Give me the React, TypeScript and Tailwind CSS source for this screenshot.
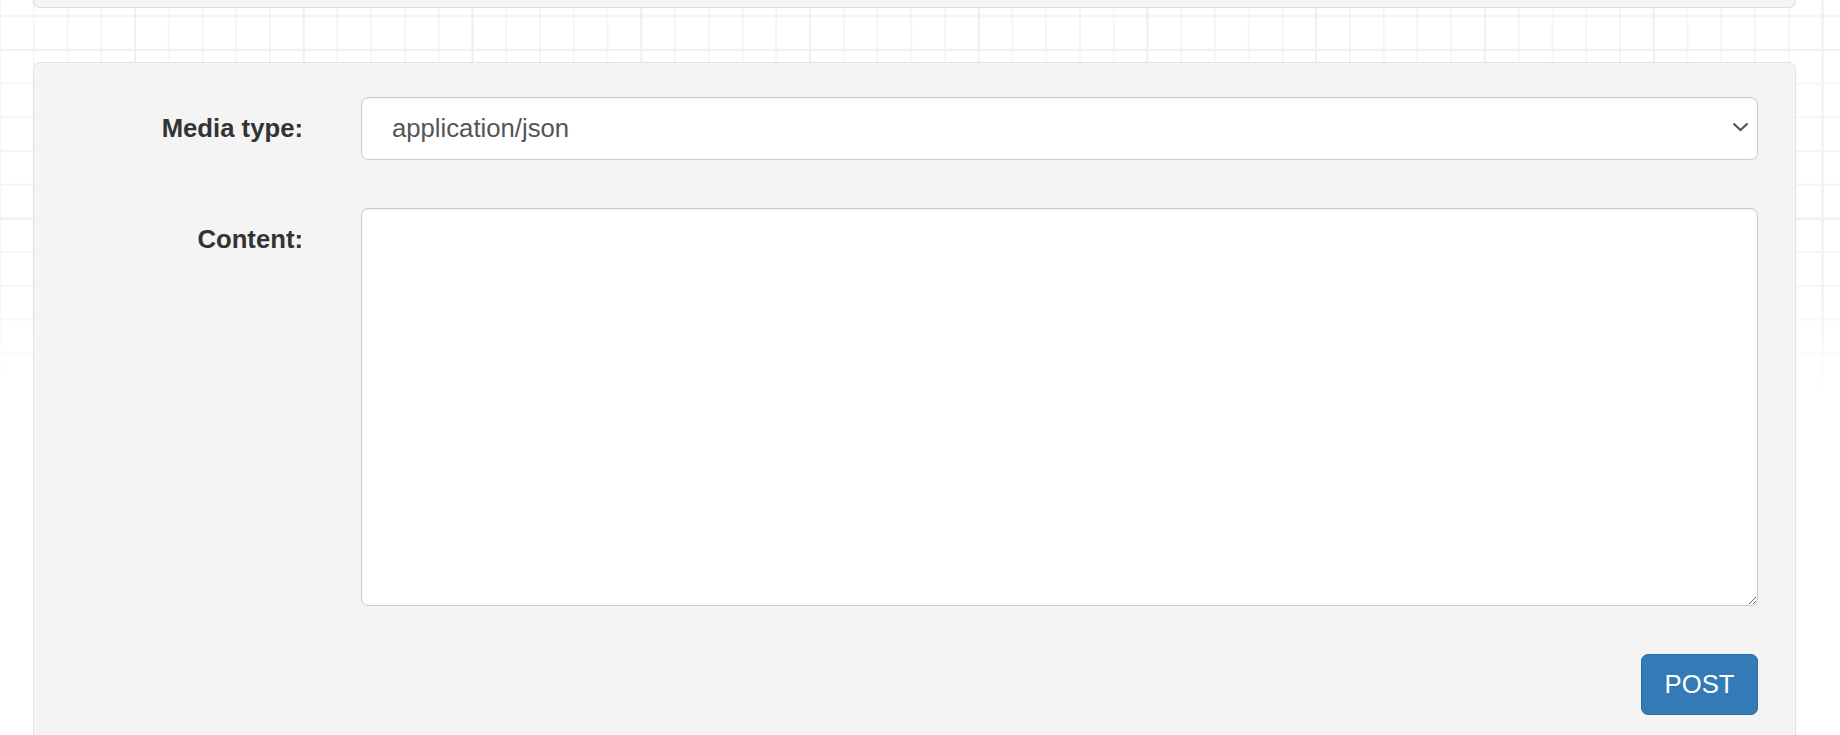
import { FC } from "react"

const GRID =
  "[background-image:linear-gradient(to_bottom,rgba(255,255,255,0)_290px,#fff_390px),linear-gradient(to_right,#f0f0f0_2px,transparent_2px),linear-gradient(to_bottom,#f0f0f0_2px,transparent_2px),linear-gradient(to_right,#f5f5f5_2px,transparent_2px),linear-gradient(to_bottom,#f5f5f5_2px,transparent_2px)] " +
  "[background-size:100%_100%,168.75px_100%,100%_168.75px,33.75px_100%,100%_33.75px] " +
  "[background-position:0_0,134px_0,0_49px,-1px_0,0_15px] " +
  "[background-repeat:no-repeat,repeat,repeat,repeat,repeat]"

const Label: FC<{ text: string }> = ({ text }) => (
  <label className="w-[269px] shrink-0 pt-[13px] text-right text-[25.7px] leading-[37px] font-bold text-[#333]">
    {text}
  </label>
)

export default function App() {
  return (
    <div
      className={
        "h-[735px] w-[1840px] overflow-hidden bg-white font-['Liberation_Sans',Arial,sans-serif] " +
        GRID
      }
    >
      {/* previous panel, scrolled out of view */}
      <div className="ml-[33px] h-[8px] w-[1763px] rounded-b-[7px] border border-t-0 border-[#dcdde1] bg-[#f5f5f7]" />

      {/* form well */}
      <div className="ml-[33px] mt-[54px] w-[1763px] rounded-[7px] border border-[#e3e3e3] bg-[#f4f4f4] pt-[34px] pr-[37px] pb-[35px]">
        <form className="flex flex-col">
          <div className="flex gap-[58px]">
            <Label text="Media type:" />
            <div className="relative flex-1">
              <select
                defaultValue="application/json"
                className="h-[63px] w-full appearance-none rounded-[7px] border border-[#ccc] bg-white pl-[30px] text-[25.7px] text-[#555] shadow-[inset_0_1px_2px_rgba(0,0,0,0.075)] outline-none"
              >
                <option>application/json</option>
                <option>application/x-www-form-urlencoded</option>
                <option>multipart/form-data</option>
              </select>
              <svg
                className="pointer-events-none absolute right-[9px] top-[25px]"
                width="17"
                height="10"
                viewBox="0 0 17 10"
                fill="none"
              >
                <path d="M1.5 1.5 L8.5 8 L15.5 1.5" stroke="#555" strokeWidth="2.2" />
              </svg>
            </div>
          </div>

          <div className="mt-[48px] flex gap-[58px]">
            <Label text="Content:" />
            <textarea className="h-[398px] flex-1 resize-y rounded-[7px] border border-[#ccc] bg-white p-[12px] text-[25.7px] text-[#555] shadow-[inset_0_1px_2px_rgba(0,0,0,0.075)] outline-none" />
          </div>

          <div className="mt-[48px] flex justify-end">
            <button
              type="button"
              className="h-[61px] w-[117px] rounded-[7px] border border-[#2e6da4] bg-[#337ab7] text-[25.7px] text-white"
            >
              POST
            </button>
          </div>
        </form>
      </div>
    </div>
  )
}
